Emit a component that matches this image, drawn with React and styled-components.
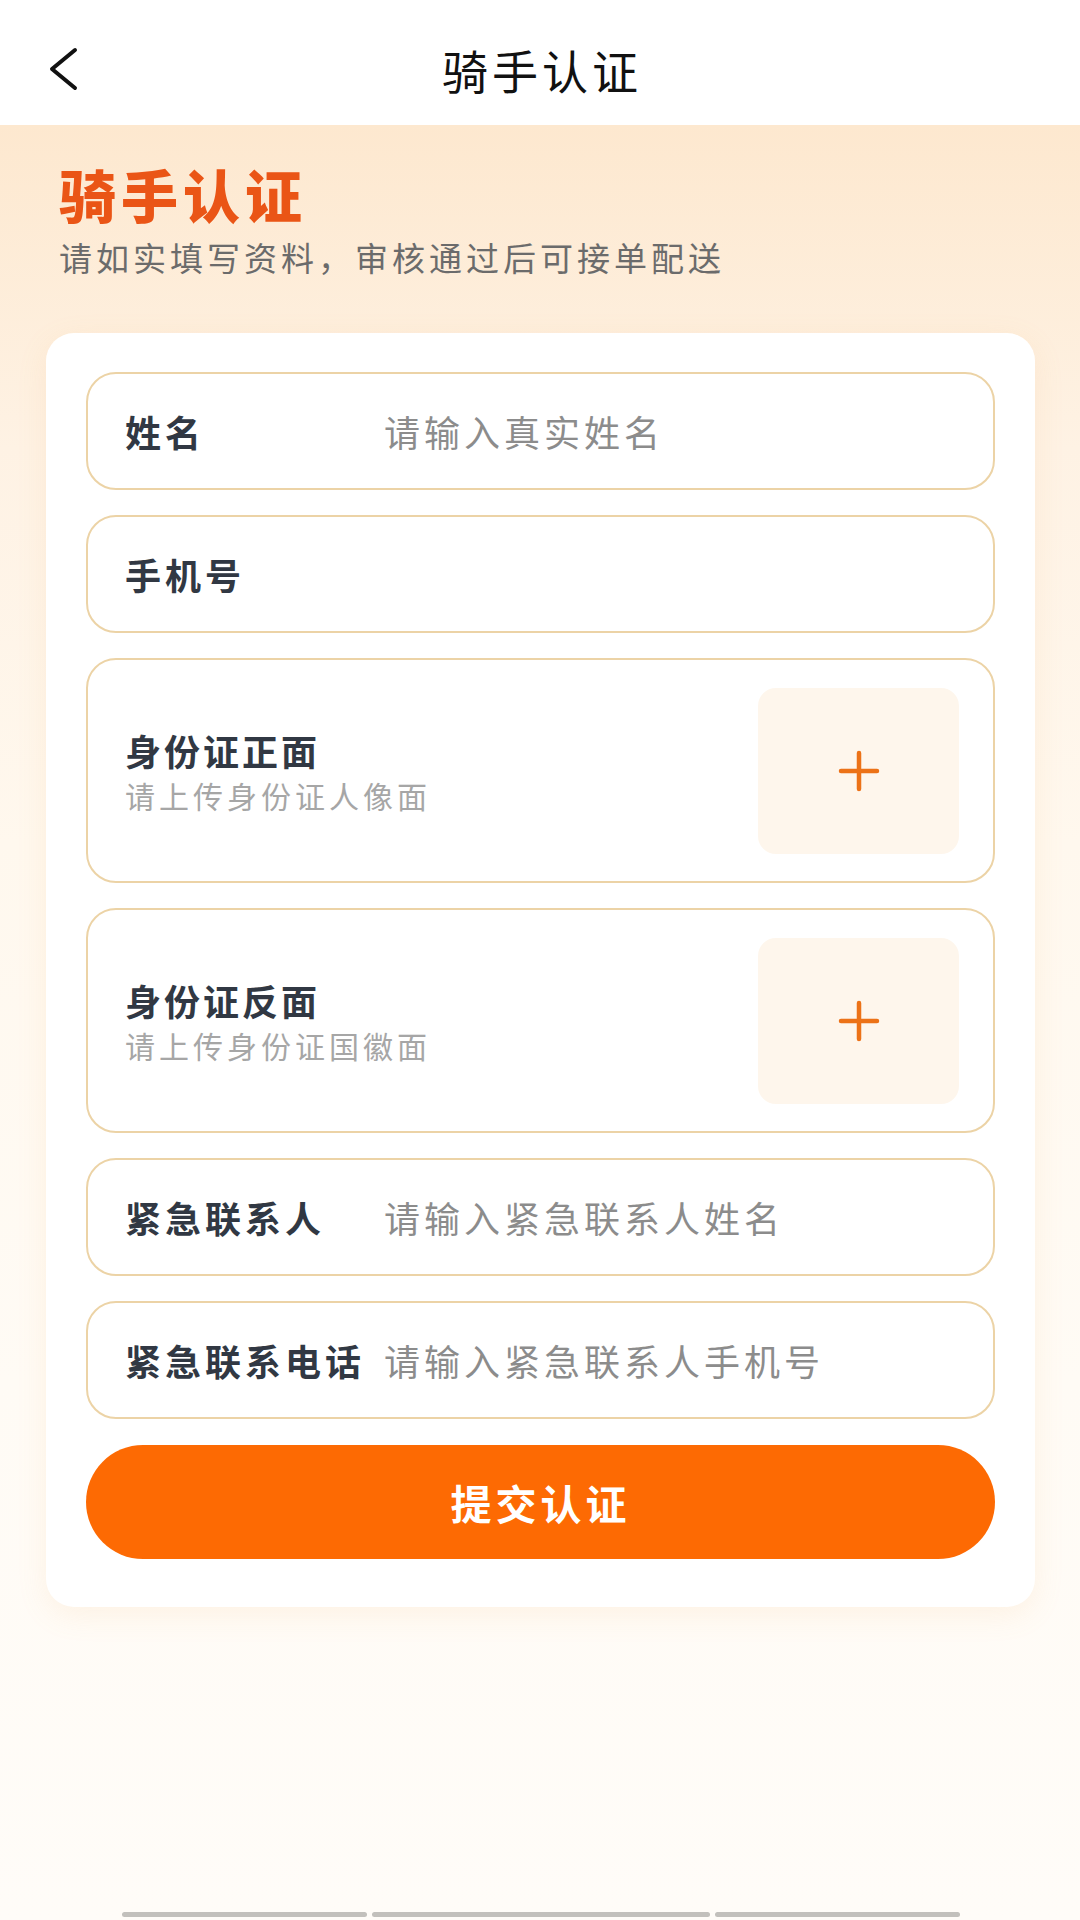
import React from 'react';
import styled, { createGlobalStyle } from 'styled-components';

const GlobalStyle = createGlobalStyle`
  * {
    box-sizing: border-box;
  }

  body {
    margin: 0;
    font-family: "Noto Sans CJK SC", "Noto Sans", sans-serif;
    background: #fffcf7;
  }
`;

const Page = styled.div`
  display: flex;
  flex-direction: column;
  width: 1080px;
  min-height: 1920px;
`;

const Header = styled.header`
  display: grid;
  grid-template-columns: 1fr auto 1fr;
  align-items: center;
  height: 125px;
  padding-top: 12px;
  background: #fff;
`;

const BackButton = styled.button`
  display: flex;
  align-items: center;
  justify-self: start;
  margin-left: 44px;
  padding: 0;
  border: none;
  background: none;
  color: #111;
`;

const HeaderTitle = styled.h1`
  margin: 0 0 0 4px;
  font-size: 46px;
  font-weight: 400;
  letter-spacing: 4px;
  color: #111;
`;

const Body = styled.main`
  display: flex;
  flex: 1;
  flex-direction: column;
  padding: 36px 45px 0 46px;
  background: linear-gradient(180deg, #fde8cf 0%, #fef2e4 18%, #fff8ee 40%, #fffbf5 70%, #fffcf8 100%);
`;

const Hero = styled.section`
  display: flex;
  flex-direction: column;
  padding-left: 13px;
`;

const HeroTitle = styled.h2`
  margin: 0;
  font-size: 57px;
  line-height: 64px;
  font-weight: 900;
  letter-spacing: 5px;
  color: #ea5516;
`;

const HeroSub = styled.p`
  margin: 12px 0 0;
  font-size: 33px;
  line-height: 40px;
  letter-spacing: 4px;
  color: #6b6b6b;
`;

const Card = styled.section`
  display: flex;
  flex-direction: column;
  gap: 25px;
  margin-top: 56px;
  padding: 39px 40px 48px;
  border-radius: 28px;
  background: #fff;
  box-shadow: 0 8px 30px rgba(240, 170, 100, 0.12);
`;

const Field = styled.div`
  display: flex;
  align-items: center;
  justify-content: space-between;
  height: ${(p) => (p.$tall ? '225px' : '118px')};
  padding: 0 34px 0 37px;
  border: 2px solid #ecd3a6;
  border-radius: 30px;
  background: #fff;
`;

const Label = styled.span`
  flex: 0 0 259px;
  font-size: 36px;
  font-weight: 700;
  letter-spacing: 4px;
  color: #313843;
`;

const Placeholder = styled.span`
  flex: 1;
  font-size: 36px;
  letter-spacing: 4px;
  color: ${(p) => (p.$empty ? 'transparent' : '#8c8c8c')};
`;

const UploadText = styled.div`
  display: flex;
  flex-direction: column;
  gap: 2px;
`;

const UploadTitle = styled.span`
  font-size: 36px;
  line-height: 46px;
  font-weight: 700;
  letter-spacing: 3px;
  color: #313843;
`;

const UploadHint = styled.span`
  font-size: 30px;
  line-height: 40px;
  letter-spacing: 4px;
  color: #a6a6a6;
`;

const UploadBox = styled.button`
  display: flex;
  align-items: center;
  justify-content: center;
  width: 201px;
  height: 166px;
  padding: 0;
  border: none;
  border-radius: 18px;
  background: #fef6ec;
  color: #ec7217;
`;

const SubmitButton = styled.button`
  height: 114px;
  margin-top: 1px;
  border: none;
  border-radius: 57px;
  background: #fd6a03;
  font-family: inherit;
  font-size: 41px;
  font-weight: 700;
  letter-spacing: 4px;
  color: #fff;
`;

const Spacer = styled.div`
  flex: 1;
`;

const GestureBar = styled.div`
  display: flex;
  justify-content: center;
  gap: 5px;
  padding-bottom: 3px;
`;

const GestureSegment = styled.span`
  width: ${(p) => p.$w}px;
  height: 5px;
  border-radius: 3px;
  background: #c2c0bc;
`;

const BackIcon = () => (
  <svg width="40" height="44" viewBox="0 0 40 44" fill="none">
    <path d="M31 3L8 22L31 41" stroke="currentColor" strokeWidth="4" strokeLinecap="round" strokeLinejoin="round" />
  </svg>
);

const PlusIcon = () => (
  <svg width="42" height="42" viewBox="0 0 42 42" fill="none">
    <path d="M21 3V39M3 21H39" stroke="currentColor" strokeWidth="4.5" strokeLinecap="round" />
  </svg>
);

const textFields = [
  { label: '姓名', placeholder: '请输入真实姓名' },
  { label: '手机号', placeholder: '', empty: true },
];

const contactFields = [
  { label: '紧急联系人', placeholder: '请输入紧急联系人姓名' },
  { label: '紧急联系电话', placeholder: '请输入紧急联系人手机号' },
];

const uploads = [
  { title: '身份证正面', hint: '请上传身份证人像面' },
  { title: '身份证反面', hint: '请上传身份证国徽面' },
];

const InputRow = ({ label, placeholder, empty }) => (
  <Field>
    <Label>{label}</Label>
    <Placeholder $empty={empty}>{placeholder || ' '}</Placeholder>
  </Field>
);

const App = () => (
  <Page>
    <GlobalStyle />
    <Header>
      <BackButton aria-label="返回">
        <BackIcon />
      </BackButton>
      <HeaderTitle>骑手认证</HeaderTitle>
      <span />
    </Header>
    <Body>
      <Hero>
        <HeroTitle>骑手认证</HeroTitle>
        <HeroSub>请如实填写资料，审核通过后可接单配送</HeroSub>
      </Hero>
      <Card>
        {textFields.map((f) => (
          <InputRow key={f.label} {...f} />
        ))}
        {uploads.map((u) => (
          <Field $tall key={u.title}>
            <UploadText>
              <UploadTitle>{u.title}</UploadTitle>
              <UploadHint>{u.hint}</UploadHint>
            </UploadText>
            <UploadBox aria-label={u.title}>
              <PlusIcon />
            </UploadBox>
          </Field>
        ))}
        {contactFields.map((f) => (
          <InputRow key={f.label} {...f} />
        ))}
        <SubmitButton>提交认证</SubmitButton>
      </Card>
      <Spacer />
      <GestureBar>
        <GestureSegment $w={245} />
        <GestureSegment $w={338} />
        <GestureSegment $w={245} />
      </GestureBar>
    </Body>
  </Page>
);

export default App;
